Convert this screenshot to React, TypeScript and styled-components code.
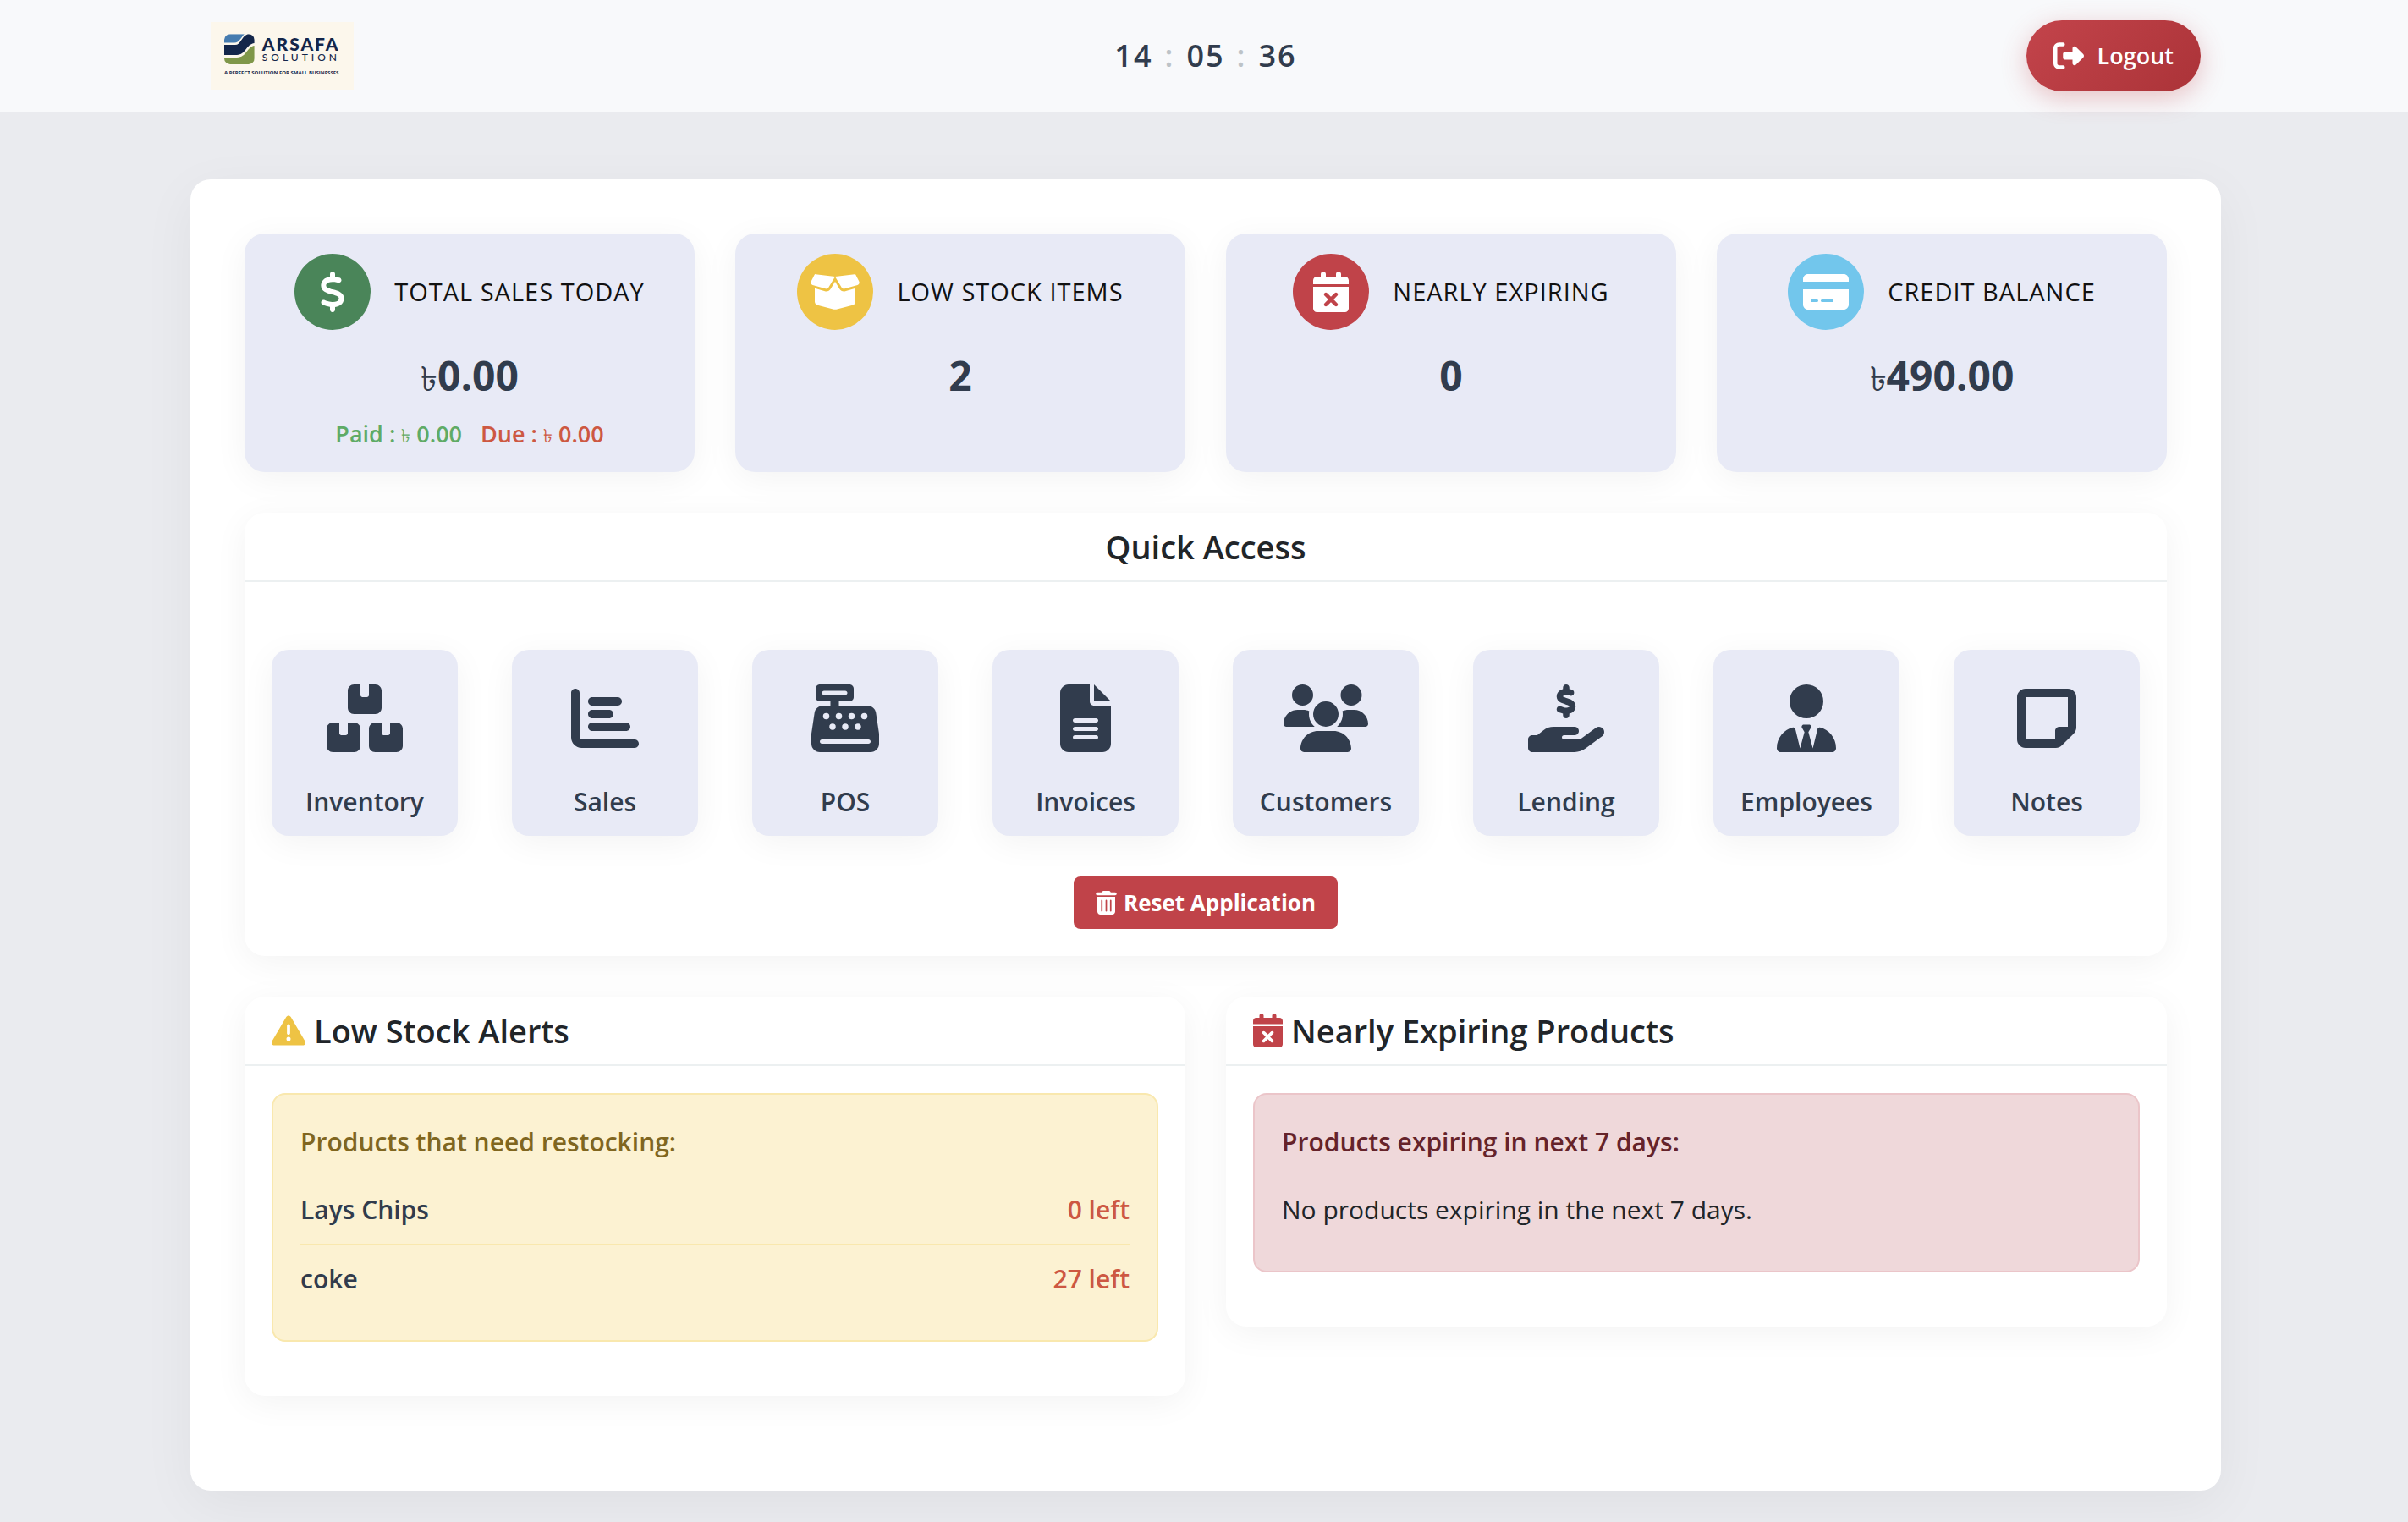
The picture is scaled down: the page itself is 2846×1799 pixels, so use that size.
import React from "react";
import styled, { createGlobalStyle } from "styled-components";
import {
  FaRightFromBracket,
  FaDollarSign,
  FaBoxOpen,
  FaCalendarXmark,
  FaCreditCard,
  FaChartBar,
  FaCashRegister,
  FaFileLines,
  FaUsers,
  FaHandHoldingDollar,
  FaUserTie,
  FaTrashCan,
  FaTriangleExclamation,
} from "react-icons/fa6";

const GlobalStyle = createGlobalStyle`
  *, *::before, *::after { box-sizing: border-box; }
  body {
    margin: 0;
    background: #eaebef;
    color: #212529;
    font-family: "Open Sans", "Noto Sans", sans-serif;
    font-size: 30px;
    line-height: 48px;
  }
  h2, h3, p, ul { margin: 0; padding: 0; }
  svg { display: block; }
`;

const TopBar = styled.header`
  padding-left: 4px;
  background: #f8f9fb;
`;

const TopBarInner = styled.div`
  max-width: 2400px;
  margin: 0 auto;
  padding: 24px;
  display: grid;
  grid-template-columns: 1fr auto 1fr;
  align-items: center;
`;

const Logo = styled.a`
  justify-self: start;
  display: flex;
  flex-direction: column;
  gap: 6px;
  width: 169px;
  height: 80px;
  padding: 14px 16px;
  background: #fcf7ec;
  color: #14264a;
  text-decoration: none;
`;

const LogoRow = styled.span`
  display: flex;
  gap: 9px;
`;

const LogoWords = styled.span`
  display: flex;
  flex-direction: column;
  padding-top: 3px;
`;

const LogoName = styled.span`
  font: 900 21px/18px Lato, sans-serif;
  letter-spacing: 2px;
`;

const LogoSub = styled.span`
  font: 500 12px/14px Lato, sans-serif;
  letter-spacing: 4px;
`;

const LogoTag = styled.span`
  font: 700 6px/8px "Open Sans", sans-serif;
  white-space: nowrap;
`;

const Clock = styled.time`
  display: flex;
  gap: 14px;
  color: #313c4d;
  font-size: 36px;
  font-weight: 600;
  letter-spacing: 2px;
`;

const Colon = styled.span`
  color: #bdc3c7;
`;

const LogoutButton = styled.button`
  justify-self: end;
  display: flex;
  align-items: center;
  gap: 16px;
  height: 84px;
  padding: 0 32px;
  border: 0;
  border-radius: 42px;
  background: linear-gradient(135deg, #c3444b, #ab3338);
  box-shadow: 0 8px 30px rgba(192, 67, 73, 0.3);
  color: #fff;
  font: inherit;
  font-size: 27px;
  font-weight: 600;
  cursor: pointer;

  svg { width: 36px; height: 36px; }
`;

const PageArea = styled.div`
  padding: 80px 0 37px 4px;
`;

const Page = styled.main`
  max-width: 2400px;
  margin: 0 auto;
  padding: 64px 64px 112px;
  display: grid;
  gap: 48px;
  border-radius: 24px;
  background: #fff;
  box-shadow: 0 16px 64px rgba(0, 0, 0, 0.05);
`;

const StatGrid = styled.section`
  display: grid;
  grid-template-columns: repeat(4, 1fr);
  gap: 48px;
`;

const StatCard = styled.article`
  padding: 24px;
  border-radius: 24px;
  background: #e8eaf6;
  box-shadow: 0 8px 40px rgba(0, 0, 0, 0.05);
  text-align: center;
`;

const StatHead = styled.div`
  display: flex;
  align-items: center;
  justify-content: center;
  gap: 28px;
`;

const StatIcon = styled.span<{ $color: string }>`
  display: grid;
  place-items: center;
  width: 90px;
  height: 90px;
  border-radius: 50%;
  background: ${(p) => p.$color};
  color: #fff;

  svg { width: 60px; height: 48px; }
`;

const StatLabel = styled.span`
  color: #111;
  font-size: 29px;
  letter-spacing: 1px;
  text-transform: uppercase;
`;

const StatValue = styled.p`
  margin-top: 22px;
  color: #313c4d;
  font-size: 48px;
  font-weight: 700;
  line-height: 64px;
`;

const StatSplit = styled.p`
  display: flex;
  justify-content: center;
  gap: 22px;
  margin-top: 16px;
  font-size: 27px;
  font-weight: 600;
  line-height: 42px;
`;

const Tone = styled.span<{ $color: string }>`
  color: ${(p) => p.$color};
`;

const Taka = styled.span<{ $large?: boolean }>`
  font-size: ${(p) => (p.$large ? 40 : 22)}px;
  font-weight: 400;
  line-height: 1;
`;

const Panel = styled.section`
  border-radius: 24px;
  background: #fff;
  box-shadow: 0 8px 40px rgba(0, 0, 0, 0.05);
`;

const PanelHead = styled.h2<{ $center?: boolean; $iconWidth?: number }>`
  display: flex;
  align-items: center;
  justify-content: ${(p) => (p.$center ? "center" : "flex-start")};
  gap: 10px;
  height: 82px;
  padding: 0 32px;
  border-bottom: 2px solid #ecf0f1;
  font-size: 38px;
  font-weight: 600;

  svg { width: ${(p) => p.$iconWidth ?? 40}px; height: 40px; }
`;

const QuickBody = styled.div`
  display: flex;
  flex-direction: column;
  align-items: center;
  gap: 48px;
  padding: 80px 32px 32px;
`;

const TileRow = styled.nav`
  align-self: stretch;
  display: flex;
  justify-content: space-between;
`;

const Tile = styled.a`
  display: flex;
  flex-direction: column;
  align-items: center;
  justify-content: space-between;
  width: 220px;
  height: 220px;
  padding: 41px 0 16px;
  border-radius: 20px;
  background: #e8eaf6;
  box-shadow: 0 8px 40px rgba(0, 0, 0, 0.05);
  color: #313c4d;
  font-weight: 600;
  text-decoration: none;

  svg { width: 100px; height: 80px; }
`;

const ResetButton = styled.button`
  display: flex;
  align-items: center;
  gap: 8px;
  height: 62px;
  padding: 0 26px;
  border: 0;
  border-radius: 8px;
  background: #c04349;
  color: #fff;
  font: inherit;
  font-size: 26px;
  font-weight: 700;
  cursor: pointer;

  svg { width: 25px; height: 28px; }
`;

const PanelGrid = styled.div`
  display: grid;
  grid-template-columns: 1fr 1fr;
  align-items: start;
  gap: 48px;
`;

const AlertWrap = styled.div`
  padding: 32px 32px 64px;
`;

const tones = {
  warning: { bg: "#fcf2d2", line: "#f9e8ae", text: "#80661f" },
  danger: { bg: "#efd8da", line: "#ebc5c9", text: "#65232a" },
};

const AlertBox = styled.div<{ $tone: keyof typeof tones }>`
  padding: 32px;
  border: 2px solid ${(p) => tones[p.$tone].line};
  border-radius: 16px;
  background: ${(p) => tones[p.$tone].bg};

  h3 {
    margin-bottom: 16px;
    color: ${(p) => tones[p.$tone].text};
    font-size: 30px;
    font-weight: 600;
  }
`;

const StockList = styled.ul`
  list-style: none;
`;

const StockRow = styled.li`
  display: flex;
  justify-content: space-between;
  padding: 16px 0;
  color: #313c4d;
  font-weight: 600;

  & + & { border-top: 2px solid #f9e8ae; }
`;

const EmptyNote = styled.p`
  padding: 16px 0;
`;

const LogoMark = () => (
  <svg width="36" height="36" viewBox="0 0 36 36" aria-hidden="true">
    <clipPath id="mark">
      <rect width="36" height="36" rx="7" />
    </clipPath>
    <g clipPath="url(#mark)">
      <rect width="36" height="36" fill="#fcf7ec" />
      <path d="M0 0H24C20 4 18 10 12 10.500H0Z" fill="#467cb0" />
      <path d="M0 13H13C20 13 20 3 28 0H36V11C26 12 26 25 15 25H0Z" fill="#14264a" />
      <path d="M0 28H15C27 28 27 15 36 14V36H0Z" fill="#7f9749" />
    </g>
  </svg>
);

const BOX =
  "M0 48C0 21.5 21.5 0 48 0H96V80C96 88.800 103.200 96 112 96H144C152.800 96 160 88.800 160 80V0H208C234.500 0 256 21.500 256 48V176C256 202.500 234.500 224 208 224H48C21.500 224 0 202.500 0 176Z";

const BoxesIcon = () => (
  <svg viewBox="0 0 576 512" fill="currentColor" aria-hidden="true">
    <path d={BOX} transform="translate(160 0)" />
    <path d={BOX} transform="translate(0 288)" />
    <path d={BOX} transform="translate(320 288)" />
  </svg>
);

const NoteIcon = () => (
  <svg viewBox="0 0 448 512" fill="currentColor" aria-hidden="true">
    <path
      fillRule="evenodd"
      d="M384 32H64C28.700 32 0 60.700 0 96V416C0 451.300 28.700 480 64 480H293.500C310.500 480 326.700 473.300 338.700 461.300L429.300 370.700C441.300 358.700 448 342.500 448 325.500V96C448 60.700 419.300 32 384 32ZM64 96H384V320H320C302.300 320 288 334.300 288 352V416H64Z"
    />
  </svg>
);

const stats: { label: string; icon: React.ComponentType; color: string; value: string; taka?: boolean }[] = [
  { label: "Total Sales Today", icon: FaDollarSign, color: "#4a8559", value: "0.00", taka: true },
  { label: "Low Stock Items", icon: FaBoxOpen, color: "#eec344", value: "2" },
  { label: "Nearly Expiring", icon: FaCalendarXmark, color: "#c04349", value: "0" },
  { label: "Credit Balance", icon: FaCreditCard, color: "#72c6ec", value: "490.00", taka: true },
];

const tiles: { label: string; icon: React.ComponentType }[] = [
  { label: "Inventory", icon: BoxesIcon },
  { label: "Sales", icon: FaChartBar },
  { label: "POS", icon: FaCashRegister },
  { label: "Invoices", icon: FaFileLines },
  { label: "Customers", icon: FaUsers },
  { label: "Lending", icon: FaHandHoldingDollar },
  { label: "Employees", icon: FaUserTie },
  { label: "Notes", icon: NoteIcon },
];

const lowStock = [
  { name: "Lays Chips", left: 0 },
  { name: "coke", left: 27 },
];

export default function App() {
  return (
    <>
      <GlobalStyle />
      <TopBar>
        <TopBarInner>
          <Logo href="#">
            <LogoRow>
              <LogoMark />
              <LogoWords>
                <LogoName>ARSAFA</LogoName>
                <LogoSub>SOLUTION</LogoSub>
              </LogoWords>
            </LogoRow>
            <LogoTag>A PERFECT SOLUTION FOR SMALL BUSINESSES</LogoTag>
          </Logo>
          <Clock>
            <span>14</span>
            <Colon>:</Colon>
            <span>05</span>
            <Colon>:</Colon>
            <span>36</span>
          </Clock>
          <LogoutButton type="button">
            <FaRightFromBracket />
            Logout
          </LogoutButton>
        </TopBarInner>
      </TopBar>

      <PageArea>
        <Page>
          <StatGrid>
            {stats.map(({ label, icon: Icon, color, value, taka }, i) => (
              <StatCard key={label}>
                <StatHead>
                  <StatIcon $color={color}>
                    <Icon />
                  </StatIcon>
                  <StatLabel>{label}</StatLabel>
                </StatHead>
                <StatValue>
                  {taka && <Taka $large>৳</Taka>}
                  {value}
                </StatValue>
                {i === 0 && (
                  <StatSplit>
                    <Tone $color="#5fab66">
                      Paid : <Taka>৳</Taka> 0.00
                    </Tone>
                    <Tone $color="#cd5842">
                      Due : <Taka>৳</Taka> 0.00
                    </Tone>
                  </StatSplit>
                )}
              </StatCard>
            ))}
          </StatGrid>

          <Panel>
            <PanelHead $center>Quick Access</PanelHead>
            <QuickBody>
              <TileRow>
                {tiles.map(({ label, icon: Icon }) => (
                  <Tile key={label} href="#">
                    <Icon />
                    {label}
                  </Tile>
                ))}
              </TileRow>
              <ResetButton type="button">
                <FaTrashCan />
                Reset Application
              </ResetButton>
            </QuickBody>
          </Panel>

          <PanelGrid>
            <Panel>
              <PanelHead>
                <FaTriangleExclamation color="#eec344" />
                Low Stock Alerts
              </PanelHead>
              <AlertWrap>
                <AlertBox $tone="warning">
                  <h3>Products that need restocking:</h3>
                  <StockList>
                    {lowStock.map(({ name, left }) => (
                      <StockRow key={name}>
                        <span>{name}</span>
                        <Tone $color="#cd5842">{left} left</Tone>
                      </StockRow>
                    ))}
                  </StockList>
                </AlertBox>
              </AlertWrap>
            </Panel>
            <Panel>
              <PanelHead $iconWidth={35}>
                <FaCalendarXmark color="#c04349" />
                Nearly Expiring Products
              </PanelHead>
              <AlertWrap>
                <AlertBox $tone="danger">
                  <h3>Products expiring in next 7 days:</h3>
                  <EmptyNote>No products expiring in the next 7 days.</EmptyNote>
                </AlertBox>
              </AlertWrap>
            </Panel>
          </PanelGrid>
        </Page>
      </PageArea>
    </>
  );
}
